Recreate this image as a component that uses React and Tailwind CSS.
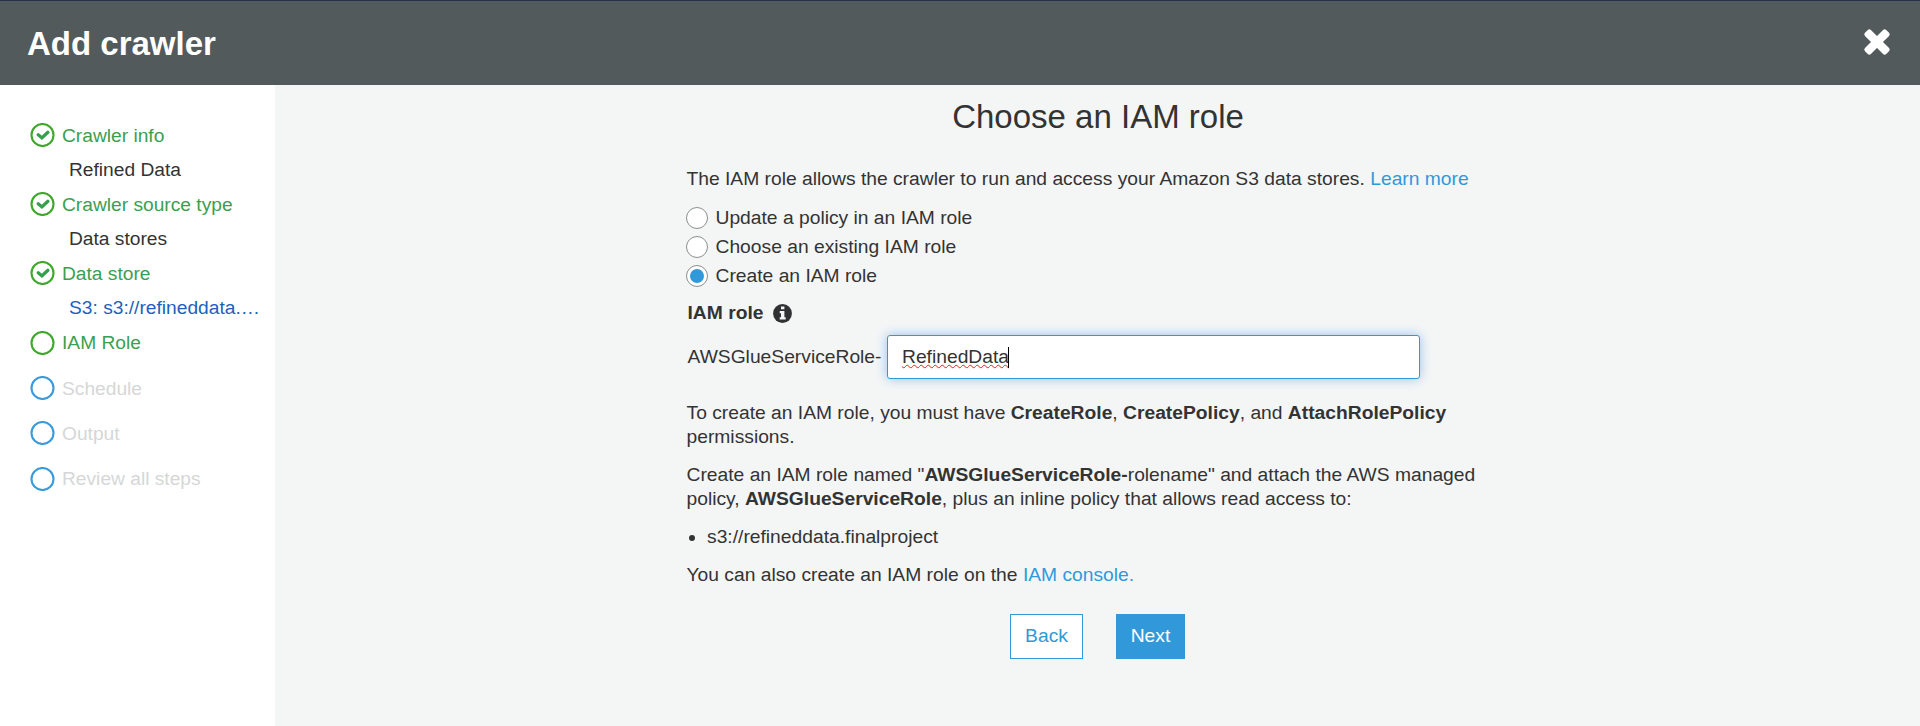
const steps = [
  { label: 'Crawler info', state: 'done', detail: 'Refined Data', gap: 'mt-0', icon: '-mt-px' },
  { label: 'Crawler source type', state: 'done', detail: 'Data stores', gap: 'mt-[11px]', icon: '-mt-px' },
  { label: 'Data store', state: 'done', detail: 'S3: s3://refineddata.…', link: true, gap: 'mt-[11px]', icon: '-mt-px' },
  { label: 'IAM Role', state: 'active', gap: 'mt-[11px]', icon: 'mt-0' },
  { label: 'Schedule', state: 'todo', gap: 'mt-[22px]', icon: '-mt-px' },
  { label: 'Output', state: 'todo', gap: 'mt-[21px]', icon: '-mt-px' },
  { label: 'Review all steps', state: 'todo', gap: 'mt-[21px]', icon: 'mt-0' },
];

function StepIcon({ state, className }) {
  return (
    <svg width="25" height="24" viewBox="0 0 25 24" fill="none" className={`shrink-0 ${className}`}>
      <circle cx="12.5" cy="12" r="11" strokeWidth="2.1" stroke={state === 'todo' ? '#3b9bda' : '#3fa72b'} />
      {state === 'done' && <path d="M8.2 11.8l3.7 3.1 6-5.6" stroke="#35a04c" strokeWidth="3.3" strokeLinecap="round" />}
    </svg>
  );
}

function Step({ label, state, detail, link, gap, icon }) {
  return (
    <li className={gap}>
      <div className="flex h-6 items-start gap-[7px]">
        <StepIcon state={state} className={icon} />
        <span className={state === 'todo' ? 'text-[#d5d7d7]' : 'text-[#3aa04f]'}>{label}</span>
      </div>
      {detail && <div className={link ? 'mt-2.5 pl-[39px] text-[#1f5fbd]' : 'mt-2.5 pl-[39px] text-[#333]'}>{detail}</div>}
    </li>
  );
}

function Radio({ label, checked }) {
  return (
    <label className="flex h-[29px] items-center gap-[7.5px]">
      <span className="mt-px flex size-[22px] items-center justify-center rounded-full border border-[#8b8f8f] bg-white">
        {checked && <span className="size-3.5 rounded-full bg-[#3199d9]" />}
      </span>
      <span>{label}</span>
    </label>
  );
}

export default function App() {
  return (
    <div className="flex h-[726px] w-[1920px] flex-col overflow-hidden bg-[#f4f6f6] font-['Liberation_Sans',Arial,sans-serif] text-[19.2px] leading-6 whitespace-nowrap text-[#333]">
      <header className="flex h-[85px] shrink-0 items-center justify-between border-t border-[#27304a] bg-[#525a5c] pr-[30px] pl-[27px] text-white">
        <h1 className="mt-0.5 text-[33px] leading-10 font-bold">Add crawler</h1>
        <svg width="26" height="26" viewBox="0 0 26 26" fill="#fff" className="-mt-0.5 overflow-visible">
          <rect x="-2" y="8.8" width="30" height="8.4" rx="2.2" transform="rotate(45 13 13)" />
          <rect x="-2" y="8.8" width="30" height="8.4" rx="2.2" transform="rotate(-45 13 13)" />
        </svg>
      </header>
      <div className="flex flex-1">
        <aside className="w-[275px] shrink-0 bg-white pt-[39px] pl-[30px]">
          <ul>{steps.map((s) => <Step key={s.label} {...s} />)}</ul>
        </aside>
        <main className="pl-[411px] text-[19.25px]">
          <div className="w-[821px]">
            <h2 className="mt-3 pl-[3px] text-center text-[33px] leading-10">Choose an IAM role</h2>
            <p className="mt-[30px] pl-[0.5px]">
              The IAM role allows the crawler to run and access your Amazon S3 data stores.{' '}
              <a className="text-[#3199d9]">Learn more</a>
            </p>
            <div className="mt-3">
              <Radio label="Update a policy in an IAM role" />
              <Radio label="Choose an existing IAM role" />
              <Radio label="Create an IAM role" checked />
            </div>
            <div className="mt-[11px] flex items-center gap-2.5 pl-[1.5px] font-bold">
              IAM role
              <svg width="19" height="19" viewBox="0 0 19 19" className="mt-px">
                <circle cx="9.5" cy="9.5" r="9.4" fill="#2f3232" />
                <path d="M8 2.6h3.4v2.7H8zM6.7 7h4.7v6.2h1.3v2.2H6.7v-2.2H8V9.2H6.7z" fill="#f4f6f6" />
              </svg>
            </div>
            <div className="mt-[10px] flex items-center">
              <span className="w-[201px] pl-[1.5px]">AWSGlueServiceRole-</span>
              <div className="flex h-11 w-[533px] items-center rounded-[3px] border border-[#3199d9] bg-white pl-3.5 shadow-[0_0_11px_rgba(49,120,220,0.45)]">
                <span className="underline decoration-[#ff1a1a] decoration-wavy decoration-1 underline-offset-1">RefinedData</span>
                <span className="-ml-px h-[21px] w-px bg-black" />
              </div>
            </div>
            <p className="mt-[22px] pl-[0.5px] leading-[24.4px]">
              To create an IAM role, you must have <b>CreateRole</b>, <b>CreatePolicy</b>, and <b>AttachRolePolicy</b>
              <br />
              permissions.
            </p>
            <p className="mt-[13px] pl-[0.5px] leading-[24.4px]">
              Create an IAM role named "<b>AWSGlueServiceRole-</b>rolename" and attach the AWS managed
              <br />
              policy, <b>AWSGlueServiceRole</b>, plus an inline policy that allows read access to:
            </p>
            <ul className="mt-[13px]">
              <li className="flex items-center gap-3 pl-[3px]">
                <span className="mt-[3px] size-1.5 rounded-full bg-[#333]" />
                s3://refineddata.finalproject
              </li>
            </ul>
            <p className="mt-3.5 pl-[0.5px]">
              You can also create an IAM role on the <a className="text-[#3199d9]">IAM console.</a>
            </p>
            <div className="mt-[27px] flex gap-[33px] pl-[324px]">
              <button className="h-[45px] w-[73px] border border-[#3199d9] bg-white text-[#3199d9]">Back</button>
              <button className="h-[45px] w-[69px] bg-[#3199d9] text-white">Next</button>
            </div>
          </div>
        </main>
      </div>
    </div>
  );
}
